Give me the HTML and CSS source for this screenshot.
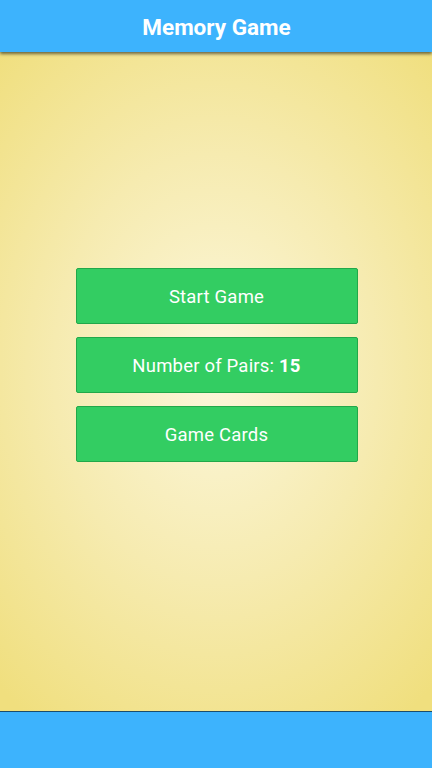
FILE: index.html
```html
<!DOCTYPE html>
<html lang="en">
<head>
    <meta charset="UTF-8">
    <meta name="viewport" content="width=device-width, initial-scale=1.0">
    <title>Memory Game</title>
    <link rel="stylesheet" href="styles.css">
</head>
<body>
    <header class="top-bar">
        <h1>Memory Game</h1>
    </header>

    <main class="menu">
        <div class="menu-buttons">
            <button class="menu-btn">Start Game</button>
            <button class="menu-btn">Number of Pairs: <b>15</b></button>
            <button class="menu-btn">Game Cards</button>
        </div>
    </main>

    <footer class="bottom-bar"></footer>
</body>
</html>
```

FILE: styles.css
```css
html, body {
    height: 100%;
}

body {
    font-family: 'Roboto', 'Liberation Sans', sans-serif;
    margin: 0;
    padding: 0;
    display: flex;
    flex-direction: column;
    background-color: #f1e17f;
}

.top-bar {
    height: 52px;
    background-color: #3db3fd;
    color: white;
    display: flex;
    align-items: center;
    justify-content: center;
    box-shadow: 0 2px 3px rgba(0, 0, 0, 0.55);
    position: relative;
    z-index: 1;
}

.top-bar h1 {
    margin: 2px 0 0 1px;
    font-size: 22.5px;
    font-weight: bold;
}

.menu {
    flex: 1;
    display: flex;
    justify-content: center;
    padding-top: 216px;
    background: radial-gradient(ellipse 75% 65% at 50% 48%, #fcf7dc 0%, #f6ebb0 50%, #f0df7e 100%);
}

.menu-buttons {
    width: 282px;
    margin-left: 1px;
    display: flex;
    flex-direction: column;
    gap: 13px;
}

.menu-btn {
    height: 56px;
    background-color: #33cd62;
    border: 1px solid #22a84a;
    border-radius: 2px;
    color: white;
    font-family: inherit;
    font-size: 18.5px;
    letter-spacing: 0.2px;
    padding: 2px 0 0;
    cursor: pointer;
}

.bottom-bar {
    height: 56px;
    background-color: #3db3fd;
    border-top: 1px solid #1b4d6c;
}
```
